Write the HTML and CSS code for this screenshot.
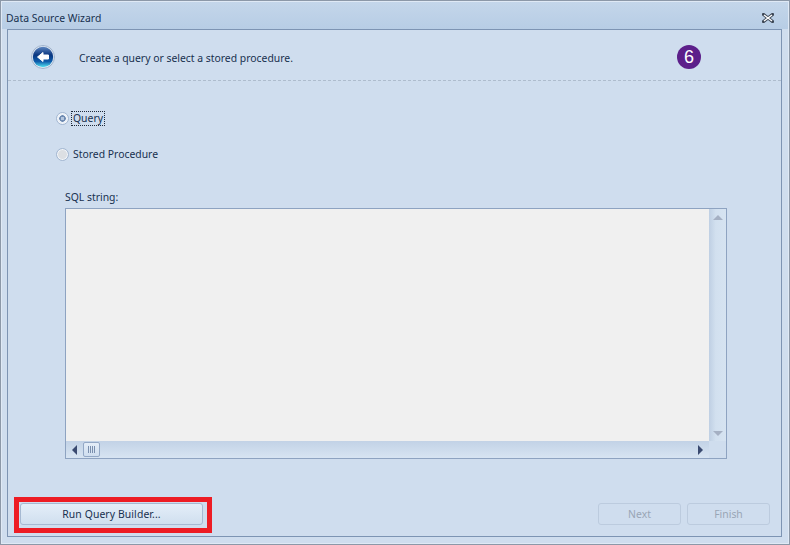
FILE: index.html
```html
<!DOCTYPE html>
<html lang="en">
<head>
<meta charset="utf-8">
<title>Data Source Wizard</title>
<link rel="stylesheet" href="styles.css">
</head>
<body>
<div class="window">
  <div class="titlebar">
    <span class="title">Data Source Wizard</span>
    <svg class="close" width="12" height="10" viewBox="0 0 12 10"><path d="M1.5 1.5 10.5 8.500M10.500 1.500 1.500 8.500" fill="none" stroke="#3c4654" stroke-width="3.2" stroke-linecap="square"/><path d="M2 2 10 8M10 2 2 8" fill="none" stroke="#fff" stroke-width="1.500"/></svg>
  </div>
  <div class="panel">
    <div class="header">
      <svg class="back" width="24" height="24" viewBox="0 0 24 24">
        <defs>
          <linearGradient id="ball" x1="0" y1="0" x2="0" y2="1">
            <stop offset="0" stop-color="#5d86c0"/>
            <stop offset=".4" stop-color="#0a3680"/>
            <stop offset=".72" stop-color="#0e5cab"/>
            <stop offset="1" stop-color="#55e4f2"/>
          </linearGradient>
        </defs>
        <circle cx="12" cy="12" r="11.500" fill="#e2eaf4" stroke="#9fb2cc" stroke-width="1"/>
        <circle cx="12" cy="12" r="10.200" fill="url(#ball)"/>
        <path d="M6.500 12 12 7.500V10H17.500V14H12V16.500Z" fill="#fff" stroke="#fff" stroke-width="1" stroke-linejoin="round"/>
      </svg>
      <span class="heading">Create a query or select a stored procedure.</span>
      <span class="badge">6</span>
    </div>
    <div class="content">
      <label class="radio-row first">
        <span class="radio checked"></span>
        <span class="radio-text focused">Query</span>
      </label>
      <label class="radio-row second">
        <span class="radio"></span>
        <span class="radio-text">Stored Procedure</span>
      </label>
      <div class="sql-label">SQL string:</div>
      <div class="editor">
        <div class="editor-top">
          <div class="textarea"></div>
          <div class="vscroll">
            <span class="tri-up"></span>
            <span class="tri-down"></span>
          </div>
        </div>
        <div class="hscroll-row">
          <div class="hscroll">
            <span class="tri-left"></span>
            <span class="thumb"><i></i><i></i><i></i><i></i></span>
            <span class="tri-right"></span>
          </div>
          <div class="corner"></div>
        </div>
      </div>
    </div>
    <div class="footer">
      <div class="highlight">
        <button class="btn btn-run" type="button">Run Query Builder...</button>
      </div>
      <div class="actions">
        <button class="btn btn-nav" type="button" disabled>Next</button>
        <button class="btn btn-nav" type="button" disabled>Finish</button>
      </div>
    </div>
  </div>
</div>
</body>
</html>
```
FILE: styles.css
```css
* { box-sizing: border-box; }
html, body { margin: 0; padding: 0; }
body {
  width: 790px;
  height: 545px;
  overflow: hidden;
  font-family: "Noto Sans", "Liberation Sans", sans-serif;
  font-size: 10.4px;
  color: #17304f;
}
.window {
  width: 790px;
  height: 545px;
  display: flex;
  flex-direction: column;
  border: 1px solid #8c98a8;
  box-shadow: inset 0 0 0 1px #dfe9f5;
  background: #cfddee;
  padding: 1px 7px 7px 6px;
}
.titlebar {
  height: 27px;
  margin: 0 -6px 0 -5px;
  padding: 5px 14px 0 4px;
  display: flex;
  align-items: center;
  justify-content: space-between;
  background: linear-gradient(#c4d6ea, #b7cde5);
}
.panel {
  flex: 1;
  display: flex;
  flex-direction: column;
  border: 1px solid #7d94b3;
  background: #cfddee;
}
.header {
  height: 51px;
  flex: none;
  display: flex;
  align-items: center;
  padding: 3px 80px 0 23px;
  border-bottom: 1px dashed #aebccd;
}
.back { flex: none; }
.heading { margin: 2px 0 0 24px; flex: 1; }
.badge {
  width: 24px;
  height: 24px;
  flex: none;
  border-radius: 50%;
  background: #5c1f8a;
  color: #fff;
  font-family: "Liberation Sans", sans-serif;
  font-size: 18px;
  line-height: 24px;
  text-align: center;
}
.content {
  flex: 1;
  display: flex;
  flex-direction: column;
  padding-left: 48px;
}
.radio-row {
  display: flex;
  align-items: center;
  height: 14px;
  gap: 3px;
}
.radio-row.first { margin-top: 30px; }
.radio-row.second { margin-top: 22px; }
.radio {
  width: 13px;
  height: 13px;
  flex: none;
  border-radius: 50%;
  border: 1px solid #a3b7d2;
  background: #dcdfe3;
  box-shadow: inset 0 0 0 1px #f2f5f9;
}
.radio.checked {
  background: radial-gradient(circle, #b4c6de 0 1.500px, #6f8bb2 2px 3px, #eaf0f8 3.500px);
}
.radio-text { padding: 0 1px; line-height: 13px; }
.radio-text.focused { outline: 1px dotted #1e2a3a; outline-offset: 0; }
.sql-label {
  margin: 29px 0 0 9px;
  height: 15px;
  line-height: 15px;
}
.editor {
  margin: 3px 0 0 9px;
  width: 662px;
  height: 251px;
  border: 1px solid #8ea3c1;
  display: flex;
  flex-direction: column;
}
.editor-top { flex: 1; display: flex; min-height: 0; }
.textarea { flex: 1; background: #f0f0f0; }
.vscroll {
  width: 17px;
  flex: none;
  display: flex;
  flex-direction: column;
  justify-content: space-between;
  align-items: center;
  padding: 6px 0 5px;
  background: linear-gradient(90deg, #bfcfe3, #d2e0ef 40%, #d6e3f1);
}
.tri-up { border: 5px solid transparent; border-top: 0; border-bottom: 5px solid #a5b0c3; }
.tri-down { border: 5px solid transparent; border-bottom: 0; border-top: 5px solid #a5b0c3; }
.hscroll-row { height: 17px; flex: none; display: flex; }
.hscroll {
  flex: 1;
  display: flex;
  align-items: center;
  padding: 0 6px 0 6px;
  background: linear-gradient(#c2d2e6, #d7e4f2);
}
.corner { width: 17px; flex: none; background: #cfddee; }
.tri-left { border: 5px solid transparent; border-left: 0; border-right: 5px solid #3a4a70; }
.tri-right { margin-left: auto; border: 5px solid transparent; border-right: 0; border-left: 5px solid #3a4a70; }
.thumb {
  margin-left: 6px;
  width: 17px;
  height: 15px;
  border: 1px solid #93a8c6;
  border-radius: 2px;
  background: linear-gradient(#e4edf8, #cfdeef);
  display: flex;
  justify-content: center;
  align-items: center;
  gap: 1px;
}
.thumb i { width: 1px; height: 7px; background: #7a8fae; }
.footer {
  flex: none;
  display: flex;
  justify-content: space-between;
  align-items: flex-start;
  padding: 0 11px 3px 6px;
}
.highlight {
  border: 5px solid #ed1c24;
  padding: 1px 4px 3px 1px;
}
.btn {
  display: block;
  height: 22px;
  padding: 0;
  font: inherit;
  color: #17304f;
  border: 1px solid #a6b9d2;
  border-radius: 3px;
  background: linear-gradient(#e4eef9, #d0dfef);
}
.btn-run { width: 183px; letter-spacing: .1px; }
.actions { display: flex; gap: 6px; margin-top: 6px; }
.btn-nav {
  width: 83px;
  color: #99a5b5;
  background: #cfddee;
  border-color: #bccbde;
}
```
